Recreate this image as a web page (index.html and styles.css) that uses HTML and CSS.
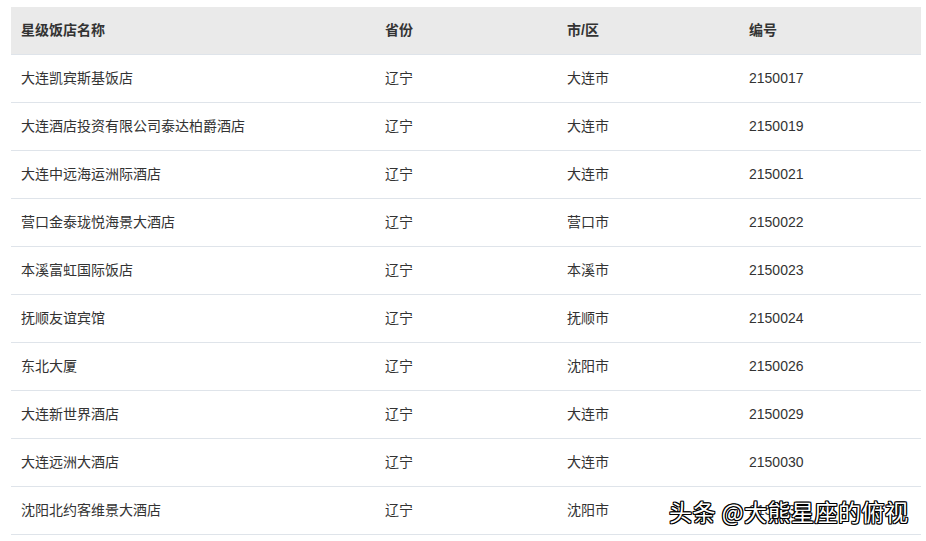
FILE: index.html
```
<!DOCTYPE html>
<html lang="zh">
<head>
<meta charset="utf-8">
<link rel="stylesheet" href="styles.css">
</head>
<body>
<div class="page">
<table class="hotels">
<colgroup><col class="c1"><col class="c2"><col class="c3"><col class="c4"></colgroup>
<thead>
<tr><th>星级饭店名称</th><th>省份</th><th>市/区</th><th>编号</th></tr>
</thead>
<tbody>
<tr><td>大连凯宾斯基饭店</td><td>辽宁</td><td>大连市</td><td>2150017</td></tr>
<tr><td>大连酒店投资有限公司泰达柏爵酒店</td><td>辽宁</td><td>大连市</td><td>2150019</td></tr>
<tr><td>大连中远海运洲际酒店</td><td>辽宁</td><td>大连市</td><td>2150021</td></tr>
<tr><td>营口金泰珑悦海景大酒店</td><td>辽宁</td><td>营口市</td><td>2150022</td></tr>
<tr><td>本溪富虹国际饭店</td><td>辽宁</td><td>本溪市</td><td>2150023</td></tr>
<tr><td>抚顺友谊宾馆</td><td>辽宁</td><td>抚顺市</td><td>2150024</td></tr>
<tr><td>东北大厦</td><td>辽宁</td><td>沈阳市</td><td>2150026</td></tr>
<tr><td>大连新世界酒店</td><td>辽宁</td><td>大连市</td><td>2150029</td></tr>
<tr><td>大连远洲大酒店</td><td>辽宁</td><td>大连市</td><td>2150030</td></tr>
<tr><td>沈阳北约客维景大酒店</td><td>辽宁</td><td>沈阳市</td><td>2150031</td></tr>
</tbody>
</table>
<div class="watermark">头条 @大熊星座的俯视</div>
</div>
</body>
</html>
```
FILE: styles.css
```
html, body {
  margin: 0;
  padding: 0;
  background: #fff;
}
.page {
  position: relative;
  padding: 7px 5px 0 11px;
  width: 910px;
  height: 534px;
  overflow: hidden;
}
.hotels {
  width: 910px;
  border-collapse: collapse;
  table-layout: fixed;
  font-family: "Liberation Sans", "Noto Sans CJK SC", sans-serif;
  font-size: 14px;
  line-height: 18px;
  color: #333;
}
.c1 { width: 364px; }
.c2 { width: 182px; }
.c3 { width: 182px; }
.c4 { width: 182px; }
.hotels th,
.hotels td {
  text-align: left;
  padding: 0 10px 2px;
  height: 45px;
  border-bottom: 1px solid #dfe4ea;
  white-space: nowrap;
}
.hotels th {
  background: #eaeaea;
  font-weight: bold;
}
.watermark {
  position: absolute;
  left: 669px;
  top: 496px;
  font-family: "Noto Sans CJK SC", sans-serif;
  font-size: 23px;
  line-height: 30px;
  color: #fff;
  letter-spacing: 0.5px;
  text-shadow: -1px -1px 0 #000, 1px -1px 0 #000, -1px 1px 0 #000, 1px 1px 0 #000, 0 1px 0 #000, 0 -1px 0 #000, 1px 0 0 #000, -1px 0 0 #000;
}
```
